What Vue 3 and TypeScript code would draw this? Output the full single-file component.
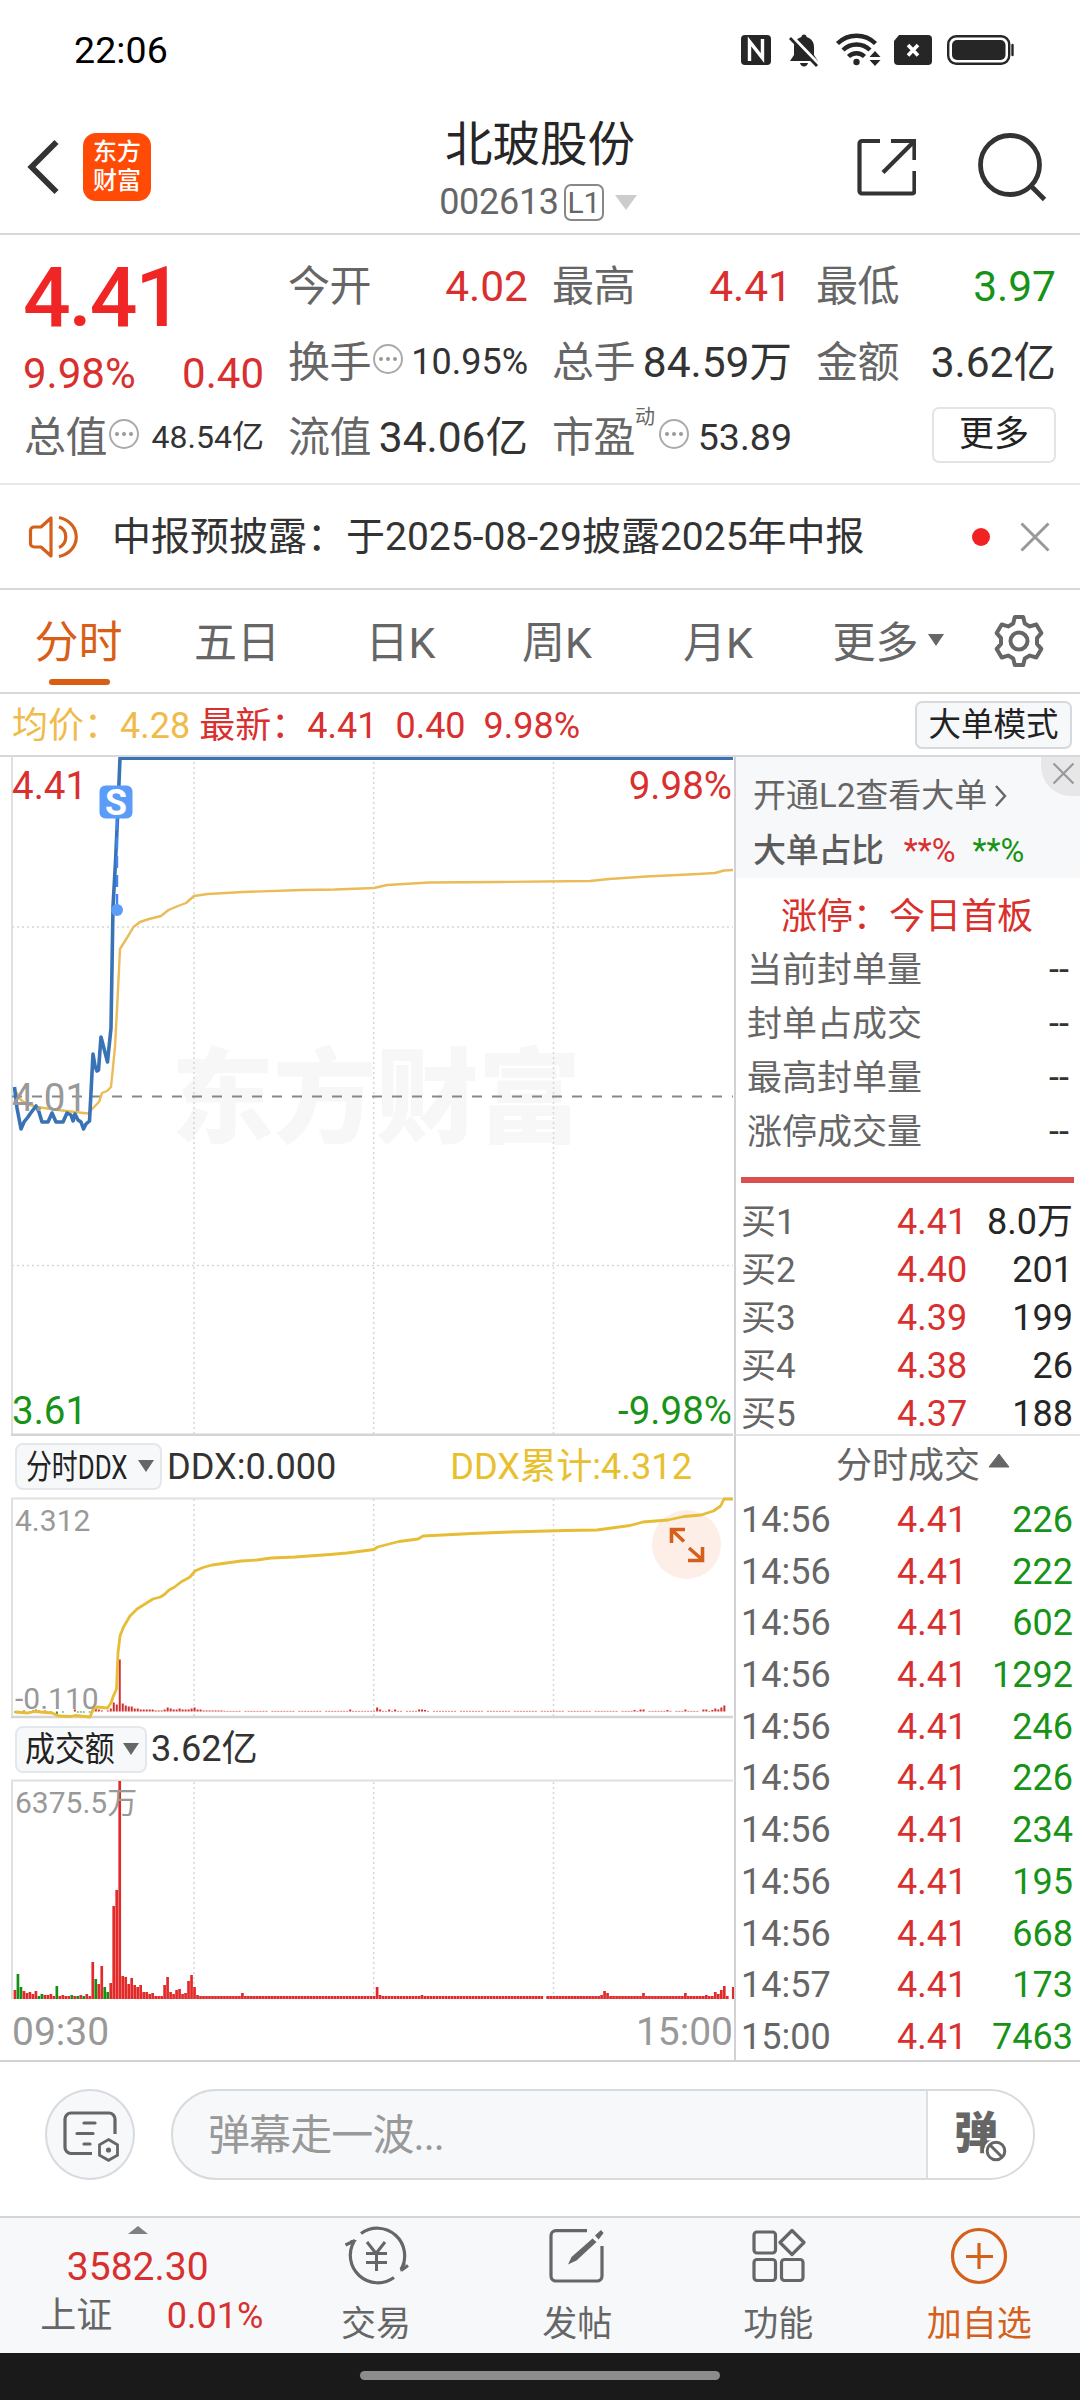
<script setup lang="ts">
interface Trade { time: string; price: string; vol: string }

const bids = [
  { label: '买1', price: '4.41', vol: '8.0万' },
  { label: '买2', price: '4.40', vol: '201' },
  { label: '买3', price: '4.39', vol: '199' },
  { label: '买4', price: '4.38', vol: '26' },
  { label: '买5', price: '4.37', vol: '188' },
]

const trades: Trade[] = ['226', '222', '602', '1292', '246', '226', '234', '195', '668', '173', '7463'].map(
  (vol, i) => ({ time: i < 9 ? '14:56' : i === 9 ? '14:57' : '15:00', price: '4.41', vol }),
)

const limits = ['当前封单量', '封单占成交', '最高封单量', '涨停成交量']
const tabs = ['分时', '五日', '日K', '周K', '月K']

// Turnover per minute; negative values are falling minutes
const opening = [
  9, -25, -12, 8, 6, 7, 5, 8, -3, -5, 4, 4, 5, 3, -13, 3, 4, 3, 3, -4, 3, -3, 4, -3, 5, 3, 37, -20, 15, 33, -12, -7,
  16, 93, 109, 218, 23, 22, 15, 21, 14, 12, 14, 7, 7, 5, 6, 3, 3, 3, 14, 22, 7, 5, 9, 10, 5, 6, 18, 24, 12, 4,
]
const later: Record<number, number> = {
  76: 6, 121: 12, 122: 4, 136: 4, 177: 0, 196: 4, 197: 8, 198: 6, 210: 6, 224: 6, 231: 4,
  234: 7, 235: 5, 236: 9, 237: 13, 238: 3, 239: 0, 240: 12,
}
const volumes = Array.from({ length: 241 }, (_, i) => {
  const v = i < opening.length ? opening[i] : (later[i] ?? 3)
  return { x: 13.6 + i * 2.993, h: Math.abs(v), up: v >= 0 }
})

// Net large-order bars under the DDX curve
const ddxOpening = [
  -1, -1, 0, 1, 0, -1, 1, 2, 1, 0, 1, 0, -1, 0, -3, 0, -1, 0, 0, 0, 2, -1, -1, -1, 0, -1, 3, 4, 2, 1, 0, 1, 3,
  9, 7, 52, 8, 6, 5, 5, 3, 3, 2, 2, 2, 2, 2, 1, 1, 1, 2, 4, 3, 2, 2, 3, 2, 2, 2, 3, 4, 2, 2, 1, 1, 1, 1, 1, 1, 1,
]
const ddxLater: Record<number, number> = {
  112: 2, 121: 4, 122: 2, 125: 2, 127: 2, 135: 2, 136: 2, 137: 1.5, 207: 1.5, 209: 2, 210: 2, 218: 1.5, 224: 2,
  230: 2, 231: 2, 233: 1.5, 234: 3, 235: 2, 236: 4, 237: 6, 238: 0, 239: 0, 240: 0,
}
const ddxBars = Array.from({ length: 241 }, (_, i) => {
  const v = i < ddxOpening.length ? ddxOpening[i] : (ddxLater[i] ?? (i % 9 === 4 ? 0 : 0.6))
  return { x: 14 + i * 2.993, h: Math.abs(v), up: v >= 0 }
})
</script>

<template>
  <div class="phone">
    <div class="status">
      <span class="clock">22:06</span>
      <svg class="status-icons" width="280" height="40" viewBox="738 30 280 40">
        <rect x="741" y="35" width="30" height="30" rx="4" fill="#262626" />
        <path d="M749.500 61V41.500L762.500 58V39" fill="none" stroke="#fff" stroke-width="3.400" />
        <path d="M804 34.500c1.500 0 2.600 1 2.600 2.600 4.800 1.500 7.400 5 7.400 10v8l4 6h-28l4-6v-8c0-5 2.600-8.500 7.400-10 0-1.600 1.100-2.600 2.600-2.600zM800 63h8c-.5 2.200-2 3.600-4 3.600s-3.500-1.400-4-3.600z" fill="#262626" />
        <path d="M792 37l28 29" stroke="#fff" stroke-width="4" />
        <path d="M790 38l27 28" stroke="#262626" stroke-width="2.800" />
        <g fill="none" stroke="#262626" stroke-width="4.400">
          <path d="M837.500 43.500a27 27 0 0 1 38 0" />
          <path d="M843 50a19.500 19.500 0 0 1 27 0" />
          <path d="M848.500 56.500a11.500 11.500 0 0 1 16 0" />
        </g>
        <circle cx="856.500" cy="62" r="3.200" fill="#262626" />
        <path d="M869.500 57l5.500-6 5.500 6zM869.500 60h11l-5.500 6z" fill="#262626" />
        <path d="M899 35h29a4 4 0 0 1 4 4v22a4 4 0 0 1-4 4h-30a4 4 0 0 1-4-4V41z" fill="#262626" />
        <path d="M908 45l10 10.500M918 45l-10 10.500" stroke="#fff" stroke-width="3.600" />
        <rect x="948.200" y="36.200" width="61" height="27.600" rx="8" fill="none" stroke="#262626" stroke-width="2.400" />
        <rect x="952" y="40" width="53.500" height="20" rx="5" fill="#262626" />
        <path d="M1012.500 45v10" stroke="#262626" stroke-width="2.400" stroke-linecap="round" />
      </svg>
    </div>

    <header class="header">
      <div class="header-left">
        <svg width="36" height="60" viewBox="0 0 36 60"><path d="M32.500 5L7.500 30 32.500 55" fill="none" stroke="#333" stroke-width="5.800" /></svg>
        <div class="logo"><span>东方</span><span>财富</span></div>
      </div>
      <div class="title">
        <div class="name">北玻股份</div>
        <div class="code"><span>002613</span><span class="level">L1</span><i class="tri-down code-tri"></i></div>
      </div>
      <div class="header-right">
        <svg width="60" height="60" viewBox="0 0 60 60" fill="none" stroke="#333" stroke-width="4.200">
          <path d="M24 4H6a2.500 2.500 0 0 0-2.500 2.500V54A2.500 2.500 0 0 0 6 56.500h50a2.500 2.500 0 0 0 2.500-2.500V34" />
          <path d="M35 4h23.500v19M58 4.500L27 35.500" />
        </svg>
        <svg width="70" height="70" viewBox="0 0 70 70" fill="none" stroke="#333" stroke-width="4.800">
          <circle cx="32" cy="33" r="29.500" /><path d="M53 54l13.500 13.500" />
        </svg>
      </div>
    </header>

    <section class="quote">
      <div class="q-main">
        <div class="last">4.41</div>
        <div class="chg red"><span>9.98%</span><span>0.40</span></div>
      </div>
      <div class="cell c12"><span>今开</span><b class="red">4.02</b></div>
      <div class="cell c13"><span>最高</span><b class="red">4.41</b></div>
      <div class="cell c14"><span>最低</span><b class="green">3.97</b></div>
      <div class="cell c22"><span>换手</span><i class="more-dot"><u></u><u></u><u></u></i><b class="f36">10.95%</b></div>
      <div class="cell c23"><span>总手</span><b>84.59万</b></div>
      <div class="cell c24"><span>金额</span><b>3.62亿</b></div>
      <div class="cell c31"><span>总值</span><i class="more-dot"><u></u><u></u><u></u></i><b class="f32">48.54亿</b></div>
      <div class="cell c32"><span>流值</span><b>34.06亿</b></div>
      <div class="cell c33"><span>市盈<sup>动</sup></span><i class="more-dot"><u></u><u></u><u></u></i><b class="f37">53.89</b></div>
      <div class="cell c34"><button class="more-btn">更多</button></div>
    </section>

    <section class="notice">
      <svg width="52" height="46" viewBox="0 0 52 46" fill="none" stroke="#d4601c" stroke-width="3.200">
        <path d="M23 4v38l-10-9H6a3.500 3.500 0 0 1-3.500-3.500v-13A3.500 3.500 0 0 1 6 13h7z" stroke-linejoin="round" />
        <path d="M31 12.500c9 4 9 17 0 21M31 3.500c23 5 23 34 0 39" />
      </svg>
      <span class="notice-text">中报预披露：于2025-08-29披露2025年中报</span>
      <i class="dot"></i>
      <svg class="notice-x" width="30" height="30" viewBox="0 0 30 30" stroke="#999" stroke-width="3"><path d="M1.500 1.500l27 27M28.500 1.500l-27 27" /></svg>
    </section>

    <nav class="tabs">
      <div v-for="(t, i) in tabs" :key="t" class="tab" :class="{ on: i === 0 }">{{ t }}</div>
      <div class="tab tab-more">更多<i class="tri-down"></i></div>
      <div class="tab gear">
        <svg width="54" height="54" viewBox="0 0 54 54" fill="none" stroke="#666" stroke-width="4" stroke-linejoin="round">
          <path d="M22.800 3h8.400l1.600 6.500 5 2.900 6.500-1.900 5 8.600-4.300 5v5.800l4.300 5-5 8.600-6.500-1.900-5 2.900-1.600 6.500h-8.400l-1.600-6.500-5-2.900-6.500 1.900-5-8.600 4.300-5v-5.800l-4.300-5 5-8.600 6.500 1.900 5-2.900z" />
          <circle cx="27" cy="27" r="8.500" />
        </svg>
      </div>
    </nav>

    <div class="legend">
      <span class="gold">均价：4.28</span><span class="red l2">最新：4.41</span><span class="red l3">0.40</span><span class="red l4">9.98%</span>
      <button class="mode">大单模式</button>
    </div>

    <main class="body">
      <div class="charts">
        <svg class="chart" width="734" height="679" viewBox="0 757 734 679">
          <text x="376" y="1135" text-anchor="middle" font-size="103" font-weight="900" fill="#f7f7f7" textLength="410">东方财富</text>
          <g class="grid"><path d="M194 757V1434M373.700 757V1434M553.500 757V1434M12 927H733M12 1265.500H733" /></g>
          <path d="M12 756V1436" stroke="#e0e0e0" stroke-width="2" />
          <path d="M11 1434.800H733" stroke="#d4d4d4" stroke-width="2.400" />
          <path d="M12 1096.500H733" stroke="#888" stroke-width="2" stroke-dasharray="10 10" />
          <path d="M16 1092L21 1100 27 1104 37 1107 58 1110 88 1113.500 95 1106 99 1102 102 1093 107 1091 111 1087 115 1047 117.500 1000 120 949 127.500 937 133.500 927 140 922 149 919 161 916 168.500 910 178 906 186 903 194 896 208 894 243 892 302 890 335 889.500 374 888 387 885 429 882.500 500 882 590 881 609 879 646 876.500 698 874 715 873 724 870.500 733 870" class="avg" />
          <path d="M14.500 1087L17 1108 21 1129 24 1122 28 1117 30 1114 36 1106 39 1112 42 1122 48 1122 52 1113 56 1122 63 1122 67 1113 71 1115 73 1121 75 1114 78 1120 81 1122 83.500 1129 86 1124 89.500 1121 93 1054 95 1066 97 1071 98.500 1070 101 1037 107.500 1062 111 1028 113 907 115.600 860 118 807 120 758.200H733" class="price" />
          <path d="M117 818V906" stroke="#3c86ee" stroke-width="2.400" stroke-dasharray="12 7" />
          <circle cx="117" cy="910" r="6" fill="#5b9cf8" />
          <rect x="99.500" y="785.500" width="33" height="33" rx="6" fill="#5b9cf8" />
          <text x="116" y="815" text-anchor="middle" font-size="36" font-weight="700" fill="#fff" textLength="22" lengthAdjust="spacingAndGlyphs">S</text>
          <g font-size="38.500">
            <text x="12" y="799" fill="#d92f2f">4.41</text>
            <text x="732" y="799" text-anchor="end" fill="#d92f2f">9.98%</text>
            <text x="12" y="1111" fill="#999">4.01</text>
            <text x="12" y="1424" fill="#179317">3.61</text>
            <text x="732" y="1424" text-anchor="end" fill="#179317">-9.98%</text>
          </g>
        </svg>

        <div class="ind">
          <button class="picker p1"><span>分时DDX</span><i class="tri-down"></i></button>
          <span>DDX:0.000</span>
          <span class="sum">DDX累计:4.312</span>
        </div>

        <svg class="chart" width="734" height="222" viewBox="0 1497 734 222">
          <path d="M194 1499V1716M373.700 1499V1716M553.500 1499V1716" class="grid" />
          <path d="M12 1498V1717M11 1498.500H733" fill="none" stroke="#e0e0e0" stroke-width="2" />
          <path d="M11 1717H733" stroke="#d4d4d4" stroke-width="2.400" />
          <text x="15" y="1531" font-size="30" fill="#999">4.312</text>
          <text x="15" y="1709" font-size="30" fill="#999">-0.110</text>
          <circle cx="686.500" cy="1544.500" r="34.500" fill="#fdefe8" />
          <rect v-for="(b, i) in ddxBars" :key="i" :x="b.x" :y="b.up ? 1711.5 - b.h : 1711.5" width="2" :height="b.h" :fill="b.up ? '#d23030' : '#2a9a2a'" />
          <path class="ddx" d="M15 1712L28 1713 35 1711.500 52 1713 59 1716 71 1716.500 75 1715.500 90 1717 93 1710 97 1707 107.500 1708 111 1703 113 1697 116.500 1689 118 1653 120 1636 123.500 1627 130 1616 137 1609 153 1599 160.500 1597 165 1594 169 1590 174.600 1587 181 1582 190 1577 195 1571 203 1567.500 212 1565 241 1561 257 1560 271 1558 295 1557 330 1554.500 347 1553 374 1549.500 377.500 1547 399 1541.500 418 1539 423 1536 472 1533.500 510 1532 566 1530.500 597 1530 630 1525.500 643 1522 668 1520 684 1516.500 701 1515 713.500 1511 720.600 1506 724 1499H733" />
          <path d="M671.500 1543V1529.500H685M672 1530L684 1541.500M689 1548L702 1559.500M702.500 1547V1560.500H688" fill="none" stroke="#d4601c" stroke-width="3.600" />
        </svg>

        <div class="ind ind2">
          <button class="picker p2"><span>成交额</span><i class="tri-down"></i></button>
          <span>3.62亿</span>
        </div>

        <svg class="chart" width="734" height="281" viewBox="0 1779 734 281">
          <path d="M194 1782V1998M373.700 1782V1998M553.500 1782V1998" class="grid" />
          <path d="M12 1780V1999M11 1780.500H733" fill="none" stroke="#e0e0e0" stroke-width="2" />
          <rect v-for="(b, i) in volumes" :key="i" :x="b.x" :y="1999 - b.h" width="2.700" :height="b.h" :fill="b.up ? '#e22a2a' : '#149014'" />
          <text x="15" y="1813" font-size="30" fill="#999">6375.5万</text>
          <text x="12" y="2045" font-size="39" fill="#999">09:30</text>
          <text x="733" y="2045" font-size="39" text-anchor="end" fill="#999">15:00</text>
        </svg>
      </div>

      <aside class="side">
        <div class="l2box">
          <div class="l2link">开通L2查看大单<svg width="14" height="24" viewBox="0 0 14 24" fill="none" stroke="#666" stroke-width="2.400"><path d="M2 2l9 10-9 10" /></svg></div>
          <div class="ratio"><strong>大单占比</strong><span class="red">**%</span><span class="green">**%</span></div>
          <div class="close"><svg width="21" height="21" viewBox="0 0 21 21" stroke="#999" stroke-width="2.200"><path d="M.5.500l20 20M20.500.500l-20 20" /></svg></div>
        </div>
        <div class="limit-title">涨停：今日首板</div>
        <div v-for="l in limits" :key="l" class="limit"><span>{{ l }}</span><b>--</b></div>
        <div class="bar"></div>
        <div class="bids">
          <div v-for="b in bids" :key="b.label" class="row"><span>{{ b.label }}</span><span class="red">{{ b.price }}</span><span class="vol">{{ b.vol }}</span></div>
        </div>
        <div class="trade-head">分时成交<svg width="22" height="15" viewBox="0 0 22 15"><path d="M11 1L21 14H1z" fill="#666" stroke="#666" stroke-linejoin="round" /></svg></div>
        <div v-for="(t, i) in trades" :key="i" class="row trade"><span>{{ t.time }}</span><span class="red">{{ t.price }}</span><span class="vol green">{{ t.vol }}</span></div>
      </aside>
    </main>

    <section class="danmaku">
      <div class="round">
        <svg width="58" height="54" viewBox="0 0 58 54" fill="none" stroke="#666" stroke-width="3.200" stroke-linecap="round">
          <path d="M30 43.500H9a6 6 0 0 1-6-6V9a6 6 0 0 1 6-6h38a6 6 0 0 1 6 6v15" stroke-linecap="butt" />
          <path d="M22 13h11M15 23.500h16M22 34h6" />
          <path d="M46.500 29.500l9 5.200v10.400l-9 5.200-9-5.200V34.700z" stroke-width="2.800" />
          <circle cx="46.500" cy="40" r="2.600" fill="#666" stroke="none" />
        </svg>
      </div>
      <div class="field">
        <span class="ph">弹幕走一波...</span>
        <div class="toggle">
          <span>弹</span>
          <svg class="ban" width="26" height="26" viewBox="0 0 26 26" fill="none"><circle cx="13" cy="13" r="12" fill="#fff" /><circle cx="13" cy="13" r="8.800" stroke="#666" stroke-width="3" /><path d="M7 7l12 12" stroke="#666" stroke-width="3" /></svg>
        </div>
      </div>
    </section>

    <footer class="nav">
      <div class="index">
        <svg width="20" height="8" viewBox="0 0 20 8"><path d="M10 0l10 8H0z" fill="#808080" /></svg>
        <div class="idx red">3582.30</div>
        <div class="idx2"><span>上证</span><span class="red">0.01%</span></div>
      </div>
      <div class="item">
        <svg width="68" height="60" viewBox="341 2226 68 60" fill="none" stroke="#666" stroke-width="3.200">
          <path d="M360 2233.500a27.500 27.500 0 0 1 40 36l3.500-6.500M399.500 2270h.5" />
          <path d="M393 2277.500a27.500 27.500 0 0 1-40-36l-3.500 0M354 2240.500l-9.500 4.500M400 2270.500l7-5" />
          <path d="M366 2242l9 11.500 9-11.500M365 2253.500h21M365 2262.500h21M375.500 2253v18" stroke-width="3" />
        </svg>
        <span>交易</span>
      </div>
      <div class="item">
        <svg width="58" height="60" viewBox="549 2226 58 60" fill="none" stroke="#666" stroke-width="3.200">
          <path d="M588 2230.700H557a5 5 0 0 0-5 5V2276a5 5 0 0 0 5 5H598a5 5 0 0 0 5-5V2246" />
          <path d="M596 2235.500l6-5.500 2.600 3-5 6.500zM593.500 2238.500l4 3.500-20 18.500-8.500 4 3.500-7.500z" fill="#666" stroke="none" />
        </svg>
        <span>发帖</span>
      </div>
      <div class="item">
        <svg width="56" height="60" viewBox="750 2226 56 60" fill="none" stroke="#666" stroke-width="3.200" stroke-linejoin="round">
          <rect x="754" y="2232" width="21.500" height="21" rx="3" /><rect x="754" y="2259.500" width="21.500" height="21" rx="3" />
          <rect x="781.500" y="2259.500" width="21.500" height="21" rx="3" /><path d="M792 2230.500l12 12-12 12-12-12z" />
        </svg>
        <span>功能</span>
      </div>
      <div class="item add">
        <svg width="60" height="60" viewBox="0 0 60 60" fill="none" stroke="#d4601c" stroke-width="3.200"><circle cx="30" cy="30" r="26.500" /><path d="M30 17v26M17 30.500h27" /></svg>
        <span>加自选</span>
      </div>
    </footer>
    <div class="home"><i></i></div>
  </div>
</template>

<style>
body { margin: 0; background: #fff; }
</style>

<style scoped>
* { box-sizing: border-box; }
.phone { width: 1080px; height: 2400px; display: flex; flex-direction: column; overflow: hidden; background: #fff; color: #333; font-family: Roboto, "Noto Sans CJK SC", sans-serif; }
button { font-family: inherit; padding: 0; margin: 0; color: #222; }
i, b { font-style: normal; font-weight: 400; }
svg { display: block; flex: none; }
.red { color: #d92f2f !important; }
.green { color: #179317 !important; }
.gold { color: #f0bb4a; }
.tri-down { display: block; width: 0; height: 0; border-left: 8px solid transparent; border-right: 8px solid transparent; border-top: 12px solid #666; }

.status { height: 100px; display: flex; justify-content: space-between; padding: 0 62px 0 74px; flex: none; }
.clock { font-size: 37.500px; line-height: 101px; color: #000; letter-spacing: .1px; }
.status-icons { margin-top: 30px; }

.header { height: 135px; flex: none; border-bottom: 2px solid #d8d8d8; display: flex; justify-content: space-between; position: relative; }
.header-left { display: flex; padding-left: 24px; width: 290px; }
.header-left svg { margin-top: 37px; }
.logo { width: 68px; height: 68px; margin: 33px 0 0 23px; border-radius: 13px; background: #ff4b05; color: #fff; font-size: 24px; font-weight: 500; line-height: 29px; display: flex; flex-direction: column; align-items: center; padding-top: 5px; }
.title { display: flex; flex-direction: column; align-items: center; width: 400px; }
.name { font-size: 47.500px; line-height: 60px; margin-top: 15px; color: #262626; }
.code { display: flex; align-items: center; height: 40px; margin-top: 7px; font-size: 36px; color: #666; letter-spacing: -0.3px; padding-right: 4px; }
.level { width: 40px; height: 37px; margin-left: 5px; border: 2px solid #888; border-radius: 7px; font-size: 30px; line-height: 34px; text-align: center; }
.code-tri { margin-left: 11px; border-left-width: 11px; border-right-width: 11px; border-top: 15px solid #ccc; }
.header-right { width: 290px; display: flex; padding: 0 32px 0 66px; justify-content: space-between; }
.header-right svg:first-child { margin-top: 37px; }
.header-right svg:last-child { margin-top: 32px; }

.quote { height: 250px; flex: none; border-bottom: 2px solid #e8e8e8; padding: 14px 24px 0; display: grid; grid-template-columns: repeat(4, 240px); grid-template-rows: repeat(3, 75.500px); column-gap: 24px; }
.q-main { grid-area: 1 / 1 / 3 / 2; }
.last { font-size: 84px; font-weight: 500; line-height: 100px; color: #f02626; margin: -1px 0 0 -1px; letter-spacing: -2.200px; }
.chg { font-size: 42px; line-height: 51px; display: flex; justify-content: space-between; margin-left: -1px; }
.cell { display: flex; align-items: center; font-size: 42px; line-height: 75px; color: #666; white-space: nowrap; }
.cell > span { position: relative; letter-spacing: -0.6px; }
.cell b { margin-left: auto; color: #333; font-size: 42.500px; }
.cell .f36 { font-size: 36px; }
.cell .f37 { font-size: 37.500px; }
.cell .f32 { font-size: 32px; }
.cell sup { position: absolute; left: 83px; top: -20px; font-size: 20px; line-height: 75px; }
.c33 .more-dot { margin-left: 24px; }
.c12 { grid-area: 1/2; } .c13 { grid-area: 1/3; } .c14 { grid-area: 1/4; }
.c22 { grid-area: 2/2; } .c23 { grid-area: 2/3; } .c24 { grid-area: 2/4; }
.c31 { grid-area: 3/1; } .c32 { grid-area: 3/2; } .c33 { grid-area: 3/3; } .c34 { grid-area: 3/4; }
.more-dot { width: 30px; height: 30px; border: 2px solid #aaa; border-radius: 50%; display: flex; align-items: center; justify-content: center; gap: 3px; margin: -7px 0 0 2px; }
.more-dot u { width: 4px; height: 4px; border-radius: 50%; background: #999; }
.more-btn { margin: -6px 0 0 auto; width: 124px; height: 56px; border: 2px solid #e4e4e4; border-radius: 7px; background: #fff; font-size: 35px; line-height: 52px; }

.notice { height: 105px; flex: none; border-bottom: 2px solid #d8d8d8; display: flex; align-items: center; padding: 0 30px 0 28px; }
.notice-text { margin-left: 32px; font-size: 39px; line-height: 60px; color: #333; white-space: nowrap; }
.dot { width: 18px; height: 18px; border-radius: 50%; background: #f22222; margin-left: auto; }
.notice-x { margin-left: 30px; }

.tabs { height: 104px; flex: none; border-bottom: 2px solid #d8d8d8; display: grid; grid-template-columns: 157px 160px 167px 146px 176px 164px 1fr; }
.tab { display: flex; align-items: center; justify-content: center; font-size: 43px; color: #666; line-height: 60px; position: relative; padding-top: 3px; }
.tab.on { color: #d95e18; font-size: 44px; }
.tab.on::after { content: ""; position: absolute; left: 49px; top: 89px; width: 61px; height: 6px; border-radius: 3px; background: #d95e14; }
.tab-more i { margin: -5px 0 0 9px; }
.tab.gear { padding: 0 12px 0 0; }

.legend { height: 63px; flex: none; display: flex; align-items: center; border-bottom: 2px solid #d8d8d8; padding: 0 8px 0 12px; font-size: 36px; line-height: 60px; white-space: nowrap; }
.legend > span { padding-top: 2px; }
.l2 { margin-left: 9px; } .l3 { margin-left: 18px; } .l4 { margin-left: 18px; }
.mode { margin-left: auto; width: 157px; height: 48px; background: #f7f8fa; border: 2px solid #d6d9de; border-radius: 7px; font-size: 32.500px; line-height: 45px; white-space: nowrap; }

.body { height: 1305px; flex: none; display: flex; border-bottom: 2px solid #d2d2d2; }
.charts { width: 734px; flex: none; }
.chart text { font-family: Roboto, "Noto Sans CJK SC", sans-serif; }
.grid { stroke: #d6d6d6; stroke-width: 1.500; stroke-dasharray: 2 3; fill: none; }
.avg { fill: none; stroke: #ebbb57; stroke-width: 2.400; stroke-linejoin: round; }
.price { fill: none; stroke: #3a72b6; stroke-width: 3.600; stroke-linejoin: round; }
.ddx { fill: none; stroke: #e6bd35; stroke-width: 2.800; stroke-linejoin: round; }
.ind { height: 61px; display: flex; align-items: center; padding-left: 15px; font-size: 36.200px; color: #333; line-height: 50px; white-space: nowrap; }
.ind2 { height: 60px; }
.picker { height: 47px; background: #f7f8fa; border: 2px solid #e4e7ec; border-radius: 8px; display: flex; align-items: center; font-size: 34px; line-height: 42px; color: #222; }
.picker span { display: block; transform-origin: 0 50%; }
.picker i { margin-top: -1px; }
.p1 { width: 147px; padding-left: 9px; margin-right: 5px; }
.p1 span { width: 112px; transform: scaleX(.76); }
.p2 { width: 132px; padding-left: 8px; margin-right: 4px; }
.p2 span { width: 98px; transform: scaleX(.88); }
.sum { margin-left: auto; margin-right: 42px; color: #e8c02e; }

.side { width: 346px; border-left: 2px solid #d2d2d6; position: relative; }
.l2box { height: 121px; background: #f7f8fa; padding: 16px 0 0 17px; position: relative; }
.l2link { display: flex; align-items: center; font-size: 33px; line-height: 46px; color: #666; }
.l2link svg { margin-left: 7px; }
.ratio { display: flex; font-size: 32.500px; line-height: 48px; margin-top: 8px; }
.ratio strong { font-size: 33px; font-weight: 500; color: #5c5c5c; margin-right: 20px; letter-spacing: -0.3px; }
.ratio .red { margin-right: 17px; }
.close { position: absolute; right: 0; top: 0; width: 39px; height: 39px; background: #e7e7e9; border-bottom-left-radius: 30px; display: flex; padding: 6px 0 0 12px; }
.limit-title { height: 65px; padding-top: 8px; font-size: 36px; line-height: 62px; color: #d9302c; text-align: center; padding-right: 2px; white-space: nowrap; }
.limit { height: 54px; line-height: 55px; font-size: 35px; display: flex; justify-content: space-between; padding: 0 11px; color: #666; }
.limit b { color: #333; font-size: 36px; }
.bar { height: 6px; margin: 18px 6px 0 5px; background: #db4f4f; }
.bids { height: 253px; padding-top: 15px; border-bottom: 2px solid #e4e4e6; }
.row { height: 48px; line-height: 49px; display: grid; grid-template-columns: 156px 70px 1fr; font-size: 36px; padding: 0 7px 0 5px; color: #666; white-space: nowrap; }
.bids .row span:first-child { font-size: 35px; }
.vol { text-align: right; color: #262626; }
.trade-head { height: 57px; display: flex; align-items: center; justify-content: center; font-size: 36px; line-height: 50px; color: #666; padding: 3px 0 0 30px; }
.trade-head svg { margin: -12px 0 0 8px; }
.row.trade { height: 51.700px; line-height: 55px; }

.danmaku { height: 154px; flex: none; display: flex; padding: 27px 45px 0; }
.round { width: 90px; height: 91px; border: 2px solid #d8dbe0; border-radius: 50%; background: #f7f8fa; display: flex; align-items: center; justify-content: center; padding: 4px 0 0 2px; }
.field { margin-left: 36px; width: 864px; height: 91px; border: 2px solid #d8dbde; border-radius: 46px; background: #f7f8fa; display: flex; overflow: hidden; }
.ph { flex: 1; padding-left: 35px; font-size: 42px; line-height: 90px; color: #999; letter-spacing: -0.9px; }
.toggle { width: 107px; border-left: 2px solid #dcdfe2; background: #fff; position: relative; }
.toggle span { display: block; padding-left: 26px; font-size: 44px; font-weight: 900; line-height: 86px; color: #666; }
.ban { position: absolute; left: 55px; top: 47px; }

.nav { height: 137px; flex: none; border-top: 2px solid #d2d4d8; background: #f7f8fa; display: grid; grid-template-columns: 275.500px repeat(4, 201.100px); }
.index { display: flex; flex-direction: column; align-items: center; padding-top: 8px; }
.idx { font-size: 39px; line-height: 48px; margin-top: 9px; }
.idx2 { width: 223px; margin-left: 28px; display: flex; justify-content: space-between; font-size: 36px; line-height: 51px; color: #666; }
.item { display: flex; flex-direction: column; align-items: center; font-size: 35px; line-height: 46px; color: #666; padding-top: 8px; }
.item span { margin-top: 16px; }
.add { color: #d4601c; }
.home { height: 49px; flex: none; background: #1a1a1a; display: flex; }
.home i { display: block; width: 360px; height: 9px; border-radius: 5px; background: #8c8c8c; margin: 18px auto 0; }
</style>
